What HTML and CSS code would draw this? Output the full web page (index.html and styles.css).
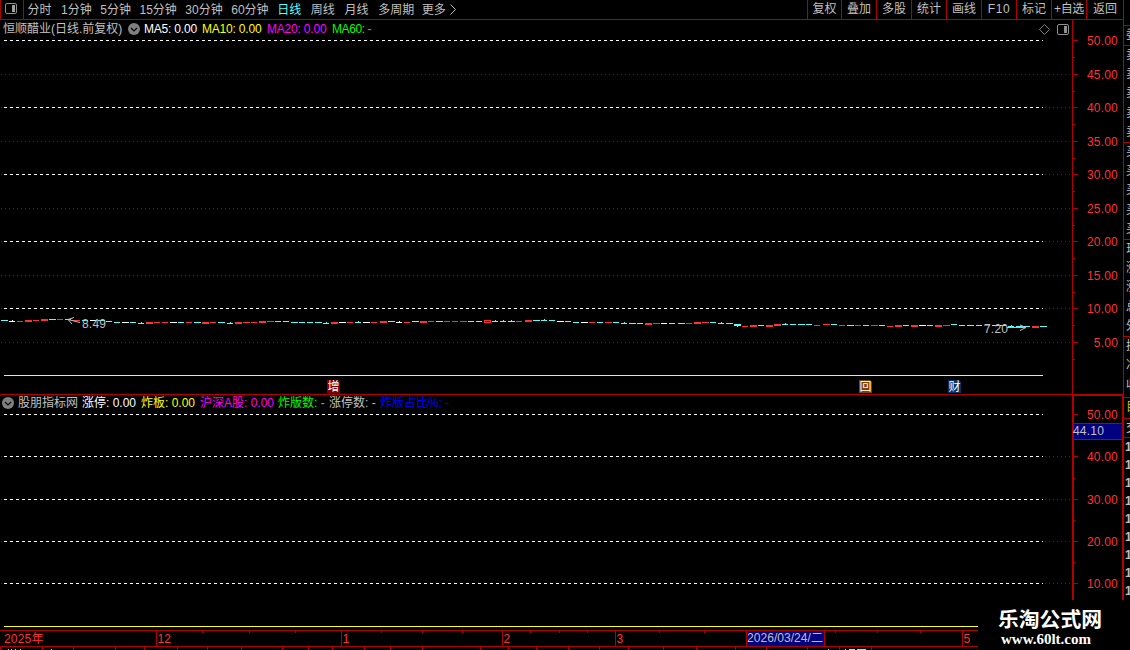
FILE: index.html
```html
<!DOCTYPE html>
<html lang="zh-CN">
<head>
  <meta charset="UTF-8">
  <title>恒顺醋业 日线</title>
  <link rel="stylesheet" href="styles.css">
</head>
<body>
  <div class="screen">
    <div class="terminal">
      <div class="toolbar">
        <div class="layout-btn">
          <svg width="12" height="11" viewBox="0 0 12 11"><rect x=".5" y=".5" width="11" height="10" rx="1.5" fill="none" stroke="#909090"/><rect x="7" y="2" width="3" height="7" fill="#a0a0a0"/></svg>
        </div>
        <div class="periods">
          <span class="w2">分时</span>
          <span class="w3">1分钟</span>
          <span class="w3">5分钟</span>
          <span class="w4">15分钟</span>
          <span class="w4">30分钟</span>
          <span class="w4">60分钟</span>
          <span class="w2 active">日线</span>
          <span class="w2">周线</span>
          <span class="w2">月线</span>
          <span class="w5">多周期</span>
          <span class="more">更多</span>
          <svg width="7" height="11" viewBox="0 0 7 11"><path d="M.5 .5L5.5 5.5L.5 10.5" fill="none" stroke="#c0c0c0"/></svg>
        </div>
        <div class="tools">
          <span>复权</span><span>叠加</span><span>多股</span><span>统计</span><span>画线</span><span class="f10">F10</span><span>标记</span><span class="tight">+自选</span><span>返回</span>
        </div>
      </div>

      <div class="pane price-pane">
        <svg id="price" width="1123" height="375" viewBox="0 20 1123 375"></svg>
        <div class="legend">
          <span class="stock">恒顺醋业(日线.前复权)</span>
          <svg class="drop" width="12" height="12" viewBox="0 0 12 12"><circle cx="6" cy="6" r="6" fill="#808080"/><path d="M3 5L6 8L9 5" fill="none" stroke="#000" stroke-width="1.2"/></svg>
          <span class="ma5">MA5: 0.00</span>
          <span class="ma10">MA10: 0.00</span>
          <span class="ma20">MA20: 0.00</span>
          <span class="green ma60">MA60: -</span>
        </div>
        <div class="pane-icons">
          <svg width="11" height="11" viewBox="0 0 11 11"><path d="M5.5 .5L10.5 5.5L5.5 10.5L.5 5.5Z" fill="none" stroke="#808080"/></svg>
          <svg width="12" height="11" viewBox="0 0 12 11"><rect x=".5" y=".5" width="11" height="10" rx="1.5" fill="none" stroke="#909090"/><rect x="7" y="2" width="3" height="7" fill="#909090"/></svg>
        </div>
        <span class="badge zeng">增</span>
        <span class="badge hui">回</span>
        <span class="badge cai">财</span>
      </div>

      <div class="pane limit-pane">
        <svg id="limit" width="1123" height="235" viewBox="0 395 1123 235"></svg>
        <div class="legend">
          <svg class="drop" width="12" height="12" viewBox="0 0 12 12"><circle cx="6" cy="6" r="6" fill="#808080"/><path d="M3 5L6 8L9 5" fill="none" stroke="#000" stroke-width="1.2"/></svg>
          <span class="name">股朋指标网</span>
          <span class="up">涨停: 0.00</span>
          <span class="broke">炸板: 0.00</span>
          <span class="ashare">沪深A股: 0.00</span>
          <span class="green count">炸版数: -</span>
          <span class="limit">涨停数: -</span>
          <span class="blue">炸版占比%: -</span>
        </div>
        <div class="cursor-value">44.10</div>
      </div>

      <div class="dates">
        <svg id="dates" width="978" height="20" viewBox="0 630 978 20"></svg>
        <span class="cursor-date">2026/03/24/二</span>
      </div>
    </div>

    <div class="quote">
      <div class="blank"></div>
      <div class="ratio"><span>委</span></div>
      <div class="five"><span>卖</span><span>卖</span><span>卖</span><span>卖</span><span>卖</span></div>
      <div class="five"><span>买</span><span>买</span><span>买</span><span>买</span><span>买</span></div>
      <div class="five"><span>现</span><span>涨</span><span>涨</span><span>总</span><span>外</span></div>
      <div class="three"><span>换</span><span>净</span><span>收</span></div>
      <div class="flag"><span>目</span></div>
      <div class="deal"><span>交</span></div>
      <div class="ticks"><span>1</span><span>1</span><span>1</span><span>1</span><span>1</span><span>1</span><span>1</span><span>1</span><span>1</span></div>
    </div>

    <div class="site">
      <div class="site-name">乐淘公式网</div>
      <div class="site-url">www.60lt.com</div>
    </div>
  </div>
  <script src="chart.js"></script>
</body>
</html>
```
FILE: styles.css
```css
body {
  margin: 0;
  background: #000;
  color: #c0c0c0;
  font: 12px/18px "Liberation Sans", "Noto Sans CJK SC", sans-serif;
  overflow: hidden;
}

.screen {
  position: relative;
  display: flex;
  width: 1130px;
  height: 650px;
  overflow: hidden;
}

svg {
  display: block;
  flex: none;
}

span {
  white-space: nowrap;
}

.terminal {
  width: 1123px;
}

/* toolbar */
.toolbar {
  display: flex;
  height: 19px;
  border-bottom: 1px solid #b00000;
}

.layout-btn {
  box-sizing: border-box;
  width: 24px;
  padding: 3px 0 0 4px;
  border-left: 1px solid #b00000;
  border-right: 1px solid #b00000;
}

.periods {
  display: flex;
  align-items: center;
  padding-left: 3.4px;
}

.w2 {
  width: 33.7px;
}

.w3 {
  width: 39.2px;
}

.w4 {
  width: 45.9px;
}

.w5 {
  width: 43.6px;
}

.more {
  width: 28.6px;
}

.active {
  color: #54ffff;
}

.tools {
  display: flex;
  margin-left: auto;
}

.tools span {
  box-sizing: border-box;
  width: 35px;
  border-left: 1px solid #b00000;
  line-height: 19px;
  text-align: center;
}

.tools span:first-child {
  width: 34px;
}

.tools span:last-child {
  width: 37px;
}

.tools .f10 {
  letter-spacing: 0.6px;
}

.tools .tight {
  letter-spacing: -0.3px;
}

/* chart panes */
.pane {
  position: relative;
}

.legend {
  position: absolute;
  top: 0;
  left: 3px;
  display: flex;
  align-items: center;
  height: 18px;
}

.stock {
  width: 125px;
}

.drop {
  margin-right: 4px;
}

.ma5 {
  width: 58px;
  color: #fff;
  letter-spacing: -0.2px;
}

.ma10 {
  width: 65px;
  color: #ff0;
  letter-spacing: -0.2px;
}

.ma20 {
  width: 65px;
  color: #f0f;
  letter-spacing: -0.2px;
}

.ma60 {
  letter-spacing: -0.4px;
}

.green {
  color: #0f0;
}

.blue {
  color: #00f;
}

.pane-icons {
  position: absolute;
  top: 4px;
  left: 1039px;
  display: flex;
  gap: 7px;
}

.limit-pane .legend {
  top: -1px;
  left: 2px;
}

.limit-pane .legend span {
  line-height: 20px;
}

.name {
  width: 64px;
}

.up {
  width: 59px;
  color: #fff;
}

.broke {
  width: 59px;
  color: #ff0;
}

.ashare {
  width: 78px;
  color: #f0f;
}

.count {
  width: 51px;
}

.limit {
  width: 51px;
}

.badge {
  position: absolute;
  top: 360px;
  width: 13px;
  height: 13px;
  color: #fff;
  line-height: 14px;
  text-align: center;
  clip-path: polygon(0 0, 11px 0, 13px 2px, 13px 13px, 0 13px);
}

.zeng {
  left: 327px;
  background: #800000;
}

.hui {
  left: 859px;
  background: #804000;
}

.cai {
  left: 948px;
  background: #003468;
}

.cursor-value {
  position: absolute;
  top: 28px;
  left: 1074px;
  box-sizing: border-box;
  width: 48px;
  height: 17px;
  border-top: 1px solid #b00000;
  border-bottom: 1px solid #b00000;
  background: #000080;
  line-height: 15px;
  text-indent: -1px;
  letter-spacing: 0.2px;
}

.dates {
  position: relative;
}

.cursor-date {
  position: absolute;
  top: 1px;
  left: 747px;
  width: 77px;
  height: 15px;
  background: #000080;
  line-height: 14px;
  letter-spacing: 0.05px;
}

.chart-label {
  fill: #ff3232;
  letter-spacing: 0.2px;
}

.mark {
  fill: #c0c0c0;
  letter-spacing: 0.2px;
}

/* quote column, cut off by the window edge */
.quote {
  width: 6px;
  height: 600px;
  border-left: 1px solid #b00000;
  overflow: hidden;
}

.quote div {
  display: flex;
  flex-direction: column;
  box-sizing: border-box;
  border-bottom: 1px solid #b00000;
  overflow: hidden;
}

.quote span {
  height: 19.3px;
  padding-left: 2px;
  line-height: 19px;
}

.quote .blank {
  height: 26px;
}

.quote .ratio {
  height: 20px;
}

.quote .five {
  height: 97px;
}

.quote .three {
  height: 61px;
}

.quote .flag {
  height: 21px;
  color: #c0c000;
}

.quote .deal {
  height: 19px;
}

.quote .ticks {
  height: 163px;
  border: 0;
}

.quote .ticks span {
  height: 18px;
  line-height: 18px;
  padding-left: 1px;
  font-weight: bold;
}

/* site mark */
.site {
  position: absolute;
  right: 0;
  bottom: 0;
  width: 152px;
  height: 50px;
  background: #000;
  color: #fff;
  white-space: nowrap;
}

.site-name {
  padding: 5px 0 0 20px;
  font: bold 20.8px/26px "Noto Sans CJK SC", sans-serif;
}

.site-url {
  padding: 1px 0 0 23px;
  font: bold 15px/14px "Liberation Serif", serif;
}
```
FILE: chart.js
```js
const RED = '#b00000';
const COLORS = { r: '#ff3232', c: '#54ffff', w: '#ffffff' };

function rect(x, y, w, h, fill) {
  return `<rect x="${x}" y="${y}" width="${w}" height="${h}" fill="${fill}"/>`;
}

function line(x1, x2, y, color, dash) {
  return `<path d="M${x1} ${y + 0.5}H${x2}" stroke="${color}" stroke-dasharray="${dash}"/>`;
}

function label(x, y, text, anchor = 'start', cls = 'chart-label') {
  return `<text class="${cls}" x="${x}" y="${y}" text-anchor="${anchor}">${text}</text>`;
}

// "color + y", upper case = two pixel body, t = tick above, d = tick below, o = hollow
const candles = `
c320 w321t r321 R320 r320 R319 c319 r319 c319 r320 c320 w320 c320 c321 c322 w322 c322 c323t R322 r322
r322 w322 c322 r322 c322 R322 r322 c322 c323t R322 r322 r322 R321 r321 c321 c321 c322 c322 c322 c322
c323t R322 w322 r322 c322t w322 r322 R321 c321 w322t r322 c321 R321 r321 c321 r321 r321 r321 c321 c321
r320o c321t c321t c321t r321 R320 c320 c320t c320 w321 c321 c322 w322 r322 c322 r322 c322 c323t c323 c323
R323 r323 w323 c323 c323 r323 R322 r322 c322 c323t c323 C324d r326 R325 c325 R325 R324 c324t c324 c324
c324 r325 r324 c324 r325 c325 r325 c325 r325 c325 r326 R325 c325 R325 w325 c325 R325 r325 c324 c325
c325 c325 r325 c325 c325 c326t c326 c326 R326 c326`.trim().split(/\s+/);

function drawCandles() {
  return candles.map((item, i) => {
    const x = Math.round(1 + i * 8.054);
    const color = COLORS[item[0].toLowerCase()];
    const y = parseInt(item.slice(1, 4), 10);
    const flag = item[4];
    if (flag === 'o') {
      return `<rect x="${x + 0.5}" y="${y + 0.5}" width="6" height="2" fill="none" stroke="${color}"/>`;
    }
    const thick = item[0] < 'a';
    let out = thick ? rect(x, y, 7, 2, color) : rect(x, y, i % 3 ? 6 : 7, 1, color);
    if (flag === 't') out += rect(x + 3, y - 1, 1, 1, color);
    if (flag === 'd') out += rect(x + 3, y + 2, 1, 1, color);
    return out;
  }).join('');
}

// price pane
let price = '';
[40, 74, 107, 141, 174, 208, 241, 275, 308, 342].forEach((y, i) => {
  if (i > 0) price += line(1, 1072, y, '#a00000', '1 3');
  if (i % 2 === 0) {
    price += rect(4, y, 1039, 1, '#000') + line(4, 1043, y, '#fff', '3 3');
  }
  price += rect(1073, y, 5, 1, RED);
  price += rect(1073, y + 17, 2, 1, RED);
  price += label(1118, y + 5, (50 - i * 5).toFixed(2), 'end');
});
price += rect(4, 375, 1039, 1, '#ff0');
price += rect(1072, 20, 1, 375, RED) + rect(0, 394, 1123, 1, RED);
price += drawCandles();
price += '<path d="M68 319.5L80 322.5M74 317.5L68 319.5L72 324" fill="none" stroke="#c0c0c0"/>';
price += label(82, 328, '8.49', 'start', 'mark');
price += label(984, 333, '7.20', 'start', 'mark');
price += '<path d="M1007 327.5H1026M1020 325L1026 327.5L1020 330.5" fill="none" stroke="#c0c0c0"/>';
document.getElementById('price').innerHTML = price;

// limit pane
let limit = '';
[414, 456, 499, 541, 583].forEach((y, i) => {
  if (i > 0) limit += line(1, 1072, y, '#a00000', '1 3') + rect(1074, y - 21, 1, 1, RED);
  limit += rect(4, y, 1039, 1, '#000') + line(4, 1043, y, '#fff', '3 3');
  limit += rect(1074, y, 4, 1, RED);
  limit += label(1118, y + 5, (50 - i * 10).toFixed(2), 'end');
});
limit += rect(4, 626, 974, 1, '#ff0');
limit += rect(1072, 395, 2, 205, RED) + rect(1122, 395, 1, 205, RED) + rect(1072, 395, 51, 1, RED);
document.getElementById('limit').innerHTML = limit;

// date axis
let dates = rect(0, 630, 978, 1, RED) + rect(0, 646, 978, 1, RED);
[[156, '12'], [341, '1'], [502, '2'], [615, '3'], [746, ''], [824, ''], [962, '5']].forEach(([x, text]) => {
  dates += rect(x, 630, 1, 16, RED);
  if (text) dates += label(x + 1.5, 643, text);
});
dates += label(4, 643, '2025年');
[202, 249, 295, 381, 422, 462, 530, 559, 587, 659, 704, 835, 877, 920].forEach(x => {
  dates += rect(x, 631, 1, 2, RED);
});
[0, 42, 73, 115, 144, 177, 207, 241, 282, 308, 332, 364, 390, 422, 480, 508, 536, 568, 599, 628, 663, 696, 735, 766, 807, 839, 871].forEach(x => {
  dates += rect(x, 647, 1, 3, RED);
});
[8, 11, 15, 20, 51, 828].forEach(x => {
  dates += rect(x, 649, 1, 1, '#c0c0c0');
});
dates += rect(845, 649, 1, 1, '#54ffff') + rect(849, 649, 6, 1, '#54ffff') + rect(857, 649, 9, 1, '#54ffff');
document.getElementById('dates').innerHTML = dates;
```
